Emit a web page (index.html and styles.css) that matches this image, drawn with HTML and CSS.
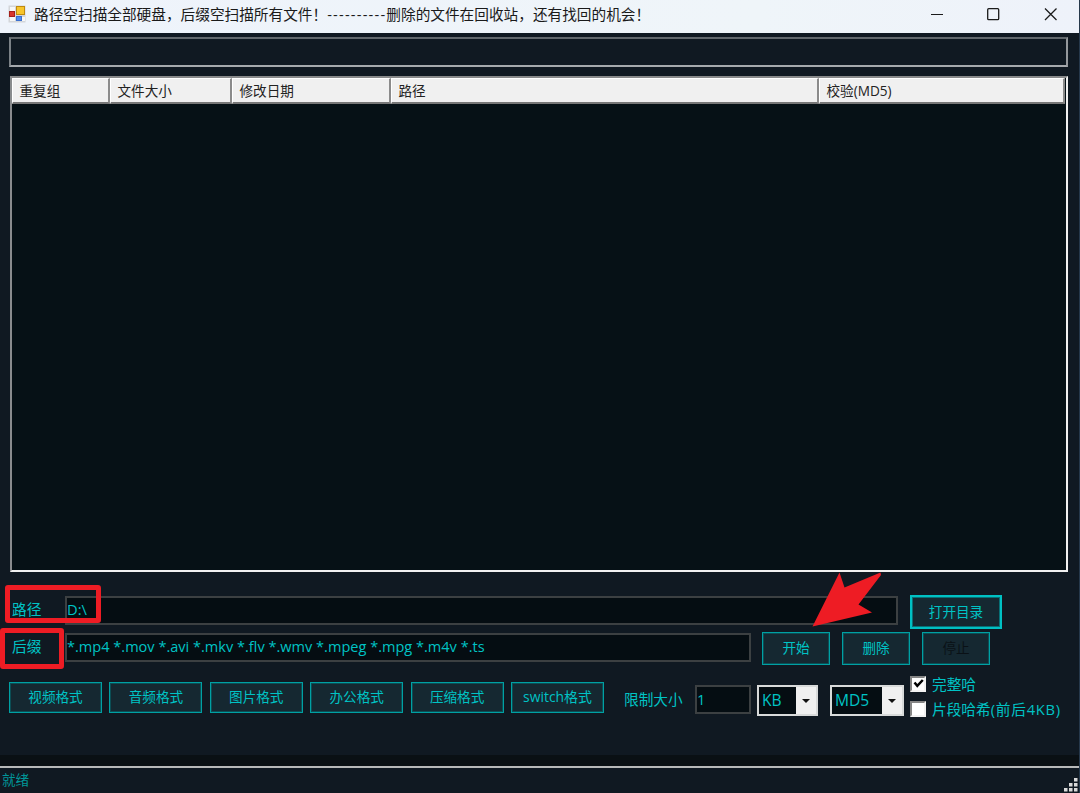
FILE: index.html
```html
<!DOCTYPE html>
<html lang="zh-CN">
<head>
  <meta charset="UTF-8">
  <title>路径空扫描全部硬盘</title>
  <link rel="stylesheet" href="styles.css">
</head>
<body>
  <div class="window">
    <header class="titlebar">
      <svg class="app-icon" width="18" height="18" viewBox="0 0 18 18">
        <rect x="0.500" y="0.500" width="17" height="17" fill="#d3d6da"/>
        <rect x="2" y="2" width="5" height="4" fill="#f7f7f7"/>
        <rect x="2" y="12" width="5" height="4" fill="#f7f7f7"/>
        <rect x="14" y="12" width="3" height="4" fill="#f7f7f7"/>
        <rect x="8.500" y="1.500" width="8" height="8" fill="#f7c52c" stroke="#c08a10"/>
        <rect x="1.500" y="6.500" width="5" height="5" fill="#d9362c" stroke="#a3201c"/>
        <rect x="8.500" y="11.500" width="5" height="4" fill="#4f8df0" stroke="#3b6fd0"/>
      </svg>
      <span class="title">路径空扫描全部硬盘，后缀空扫描所有文件！<span class="dashes">----------</span>删除的文件在回收站，还有找回的机会！</span>
      <svg class="window-btns" width="130" height="14" viewBox="0 0 130 14" fill="none" stroke="#1b1b1b" stroke-width="1.3">
        <path d="M1 7.500H13" stroke-width="1"/>
        <rect x="57.700" y="1.700" width="11" height="11" rx="1"/>
        <path d="M115 1.500L126.500 13M126.500 1.500L115 13"/>
      </svg>
    </header>

    <div class="progress"></div>

    <div class="list">
      <div class="list-head">
        <span class="col">重复组</span>
        <span class="col">文件大小</span>
        <span class="col">修改日期</span>
        <span class="col">路径</span>
        <span class="col">校验(MD5)</span>
      </div>
    </div>

    <div class="row row-path">
      <label class="label">路径</label>
      <div class="input path-input">D:\</div>
      <button class="btn btn-open">打开目录</button>
    </div>

    <div class="row row-suffix">
      <label class="label">后缀</label>
      <div class="input suffix-input">*.mp4 *.mov *.avi *.mkv *.flv *.wmv *.mpeg *.mpg *.m4v *.ts</div>
      <button class="btn btn-action">开始</button>
      <button class="btn btn-action">删除</button>
      <button class="btn btn-action" disabled>停止</button>
    </div>

    <div class="row row-format">
      <div class="formats">
        <button class="btn">视频格式</button>
        <button class="btn">音频格式</button>
        <button class="btn">图片格式</button>
        <button class="btn">办公格式</button>
        <button class="btn">压缩格式</button>
        <button class="btn btn-switch">switch格式</button>
      </div>
      <label class="limit-label">限制大小</label>
      <div class="input limit-input">1</div>
      <div class="select select-unit"><span>KB</span><i class="arrow"></i></div>
      <div class="select select-hash"><span>MD5</span><i class="arrow"></i></div>
      <div class="checks">
        <label class="check">
          <span class="box"><svg width="11" height="11" viewBox="0 0 11 11"><path d="M1.500 4.500L4.300 7.800L9.800 2" fill="none" stroke="#000" stroke-width="2.500"/></svg></span>完整哈
        </label>
        <label class="check">
          <span class="box"></span><span>片段哈希<span class="note">(前后4KB)</span></span>
        </label>
      </div>
    </div>

    <footer class="statusbar">
      <span>就绪</span>
      <svg class="grip" width="16" height="16" viewBox="0 0 16 16" fill="#d9d9d9">
        <rect x="11" y="1" width="3.500" height="3.500"/>
        <rect x="6" y="6" width="3.500" height="3.500"/>
        <rect x="11" y="6" width="3.500" height="3.500"/>
        <rect x="1" y="11" width="3.500" height="3.500"/>
        <rect x="6" y="11" width="3.500" height="3.500"/>
        <rect x="11" y="11" width="3.500" height="3.500"/>
      </svg>
    </footer>

    <!-- 标注 -->
    <div class="mark mark-path"></div>
    <div class="mark mark-suffix"></div>
    <svg class="mark-arrow" width="70" height="56" viewBox="0 0 70 56">
      <path d="M0.500 54.500L27.500 0.500L32.500 15.500L68.500 0.500L69 3L46.500 32.500L60 40.500Z" fill="#ee1c24"/>
    </svg>
  </div>
</body>
</html>
```
FILE: styles.css
```css
* {
  box-sizing: border-box;
}

body {
  margin: 0;
  font-family: "Open Sans", "Noto Sans CJK SC", sans-serif;
  font-size: 14.7px;
  color: #00c3c5;
  background-color: #101922;
}

.window {
  position: relative;
  display: flex;
  flex-direction: column;
  width: 1080px;
  height: 793px;
  overflow: hidden;
  border-right: 1px solid #26384b;
}

/* 标题栏 */
.titlebar {
  display: flex;
  align-items: center;
  height: 33px;
  padding: 0 19px 5px 8px;
  background: linear-gradient(90deg, #eef3fb, #eff5f9 70%, #eef2fa);
  color: #1a1a1a;
}

.title {
  flex: 1;
  margin-left: 8px;
  font-size: 14.67px;
  line-height: 20px;
  white-space: nowrap;
}

.dashes {
  letter-spacing: 1.2px;
}

.progress {
  height: 30px;
  margin: 4px 11px 0 9px;
  border: 2px solid #a5a9ad;
  border-top-color: #62686d;
  border-left-color: #7b8186;
  border-right-color: #94989c;
}

/* 文件列表 */
.list {
  height: 496px;
  margin: 9px 11px 0 10px;
  border: 2px solid #f1f1f1;
  border-top-color: #88898a;
  border-left-color: #898c8e;
  background-color: #061116;
}

.list-head {
  display: grid;
  grid-template-columns: 98px 122px 159px 428px 1fr;
  height: 25px;
  margin-right: 1px;
  background-color: #f0f0f0;
  color: #222;
  font-size: 13.6px;
  line-height: 23px;
}

.col {
  padding-left: 6.5px;
  border: 1px solid #fff;
  border-right: 2px solid #8b8b8b;
  border-bottom: 2px solid #777;
}

/* 表单 */
.row {
  display: flex;
}

.label {
  width: 53px;
  padding-top: 4px;
  line-height: 20px;
}

.input {
  height: 29px;
  border: 2px solid #3c4042;
  background-color: #050d12;
  line-height: 24px;
  white-space: nowrap;
}

.btn {
  padding: 0 0 1px;
  border: 1px solid #00a0a3;
  background-color: #152831;
  box-shadow: inset 0 0 0 1px #0b4e55;
  color: #00c3c5;
  font-family: inherit;
  font-size: 13.6px;
  line-height: 20px;
  white-space: nowrap;
}

.btn:disabled {
  color: #0a1116;
}

.row-path {
  height: 34px;
  margin-top: 23px;
  padding-left: 12px;
}

.path-input {
  width: 833px;
  margin-top: 1px;
  line-height: 22px;
}

.btn-open {
  width: 92px;
  height: 34px;
  margin-left: 12px;
  border: 2px solid #00c0c3;
  box-shadow: inset 0 0 0 1px #087076;
}

.row-suffix {
  height: 34px;
  margin-top: 3px;
  padding-left: 12px;
}

.suffix-input {
  width: 686px;
  margin: 1px 11px 0 0;
  font-size: 14.55px;
  line-height: 22px;
}

.btn-action {
  width: 68px;
  height: 33px;
  margin-right: 12px;
}

.row-format {
  height: 42px;
  margin-top: 9px;
  padding-left: 9px;
}

.formats {
  display: flex;
  gap: 7.4px;
  margin-top: 7px;
}

.formats .btn {
  width: 93px;
  height: 31px;
}

.formats .btn-switch {
  font-size: 13.9px;
}

.limit-label {
  width: 71px;
  margin-left: 20px;
  padding-top: 14px;
  line-height: 20px;
}

.limit-input {
  width: 56px;
  margin: 10px 6px 0 0;
}

.select {
  display: flex;
  height: 31px;
  margin: 10px 12px 0 0;
  border: 2px solid #d8dada;
  background-color: #050d12;
  font-size: 15.6px;
  line-height: 26px;
}

.select span {
  flex: 1;
  padding-left: 3px;
}

.arrow {
  display: flex;
  align-items: center;
  justify-content: center;
  width: 20px;
  background-color: #f0f0f0;
}

.arrow::after {
  content: "";
  border: 4px solid transparent;
  border-top-color: #111;
  border-bottom: 0;
}

.select-unit {
  width: 61px;
}

.select-hash {
  width: 74px;
  margin-right: 6px;
}

.checks {
  display: flex;
  flex-direction: column;
  gap: 9px;
  margin-top: 1px;
}

.check {
  display: flex;
  align-items: center;
  gap: 6px;
  height: 16px;
  line-height: 16px;
  white-space: nowrap;
}

.note {
  letter-spacing: 0.75px;
}

.box {
  width: 16px;
  height: 16px;
  padding-left: 1px;
  border: 2px solid #f2f2f2;
  border-top-color: #858585;
  border-left-color: #858585;
  background-color: #fff;
}

.box svg {
  display: block;
}

/* 状态栏 */
.statusbar {
  display: flex;
  justify-content: space-between;
  height: 38px;
  margin-top: auto;
  padding: 4px 0 0 2px;
  border-top: 11px solid #0a1014;
  color: #009699;
  font-size: 13.6px;
  line-height: 20px;
  box-shadow: inset 0 2px #b7b9b9;
}

.grip {
  margin-top: 7px;
}

/* 红色标注 */
.mark {
  position: absolute;
  border: 5px solid #ee1c24;
  border-radius: 3px;
}

.mark-path {
  left: 5px;
  top: 585px;
  width: 96px;
  height: 38px;
}

.mark-suffix {
  left: 0;
  top: 628px;
  width: 64px;
  height: 41px;
}

.mark-arrow {
  position: absolute;
  left: 812px;
  top: 572px;
}
```
